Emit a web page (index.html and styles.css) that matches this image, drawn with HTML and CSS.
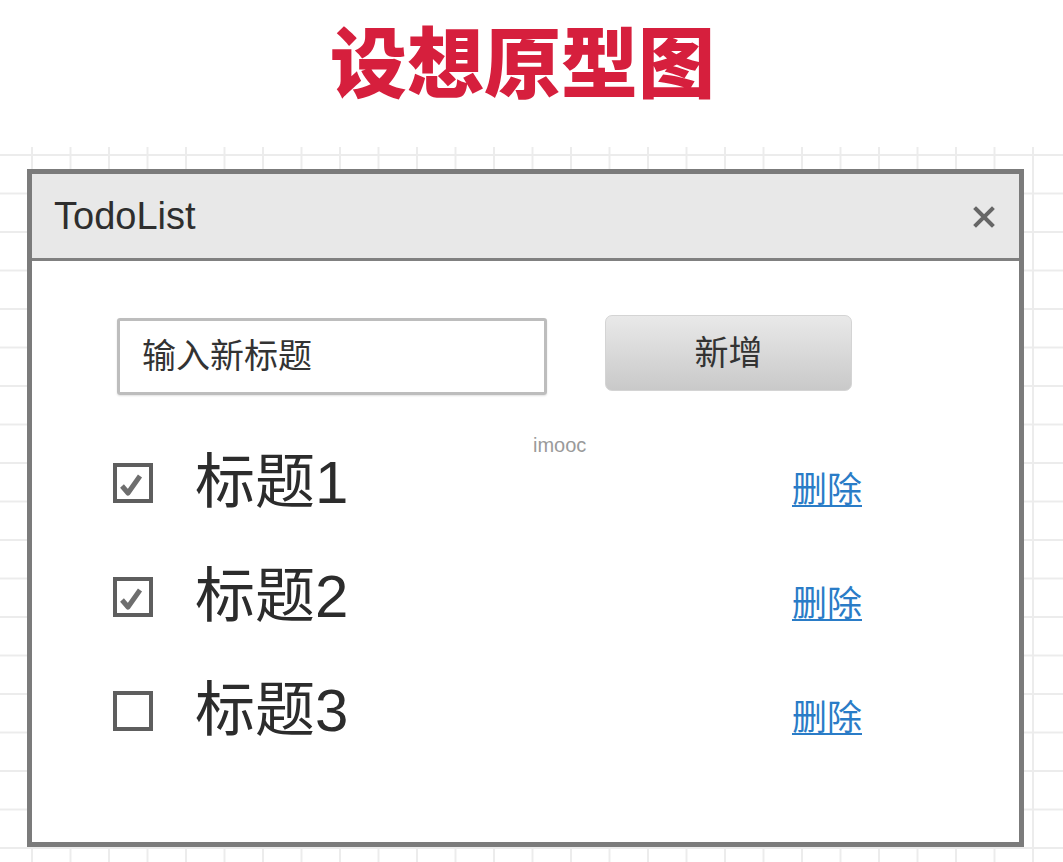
FILE: index.html
```html
<!DOCTYPE html>
<html lang="zh-CN">
<head>
<meta charset="utf-8">
<title>设想原型图</title>
<link rel="stylesheet" href="styles.css">
</head>
<body>
<h1 class="page-title">设想原型图</h1>
<section class="canvas">
  <div class="window">
    <header class="window-header">
      <span class="window-title">TodoList</span>
      <svg class="close-icon" width="22" height="22" viewBox="0 0 22 22" aria-hidden="true">
        <path d="M3 3 L19 19 M19 3 L3 19" stroke="#666" stroke-width="4" stroke-linecap="square" fill="none"/>
      </svg>
    </header>
    <div class="window-body">
      <div class="add-row">
        <div class="todo-input">输入新标题</div>
        <button class="add-btn" type="button">新增</button>
      </div>
      <ul class="todo-list">
        <li class="todo-item">
          <span class="checkbox">
            <svg width="32" height="32" viewBox="0 0 32 32" aria-hidden="true"><path d="M5 19 L11 26 L23 9" stroke="#6e6e6e" stroke-width="5" fill="none" stroke-linejoin="round"/></svg>
          </span>
          <span class="todo-text">标题1</span>
          <a class="delete-link" href="#">删除</a>
        </li>
        <li class="todo-item">
          <span class="checkbox">
            <svg width="32" height="32" viewBox="0 0 32 32" aria-hidden="true"><path d="M5 19 L11 26 L23 9" stroke="#6e6e6e" stroke-width="5" fill="none" stroke-linejoin="round"/></svg>
          </span>
          <span class="todo-text">标题2</span>
          <a class="delete-link" href="#">删除</a>
        </li>
        <li class="todo-item">
          <span class="checkbox"></span>
          <span class="todo-text">标题3</span>
          <a class="delete-link" href="#">删除</a>
        </li>
      </ul>
    </div>
  </div>
  <span class="watermark">imooc</span>
</section>
</body>
</html>
```

FILE: styles.css
```css
html, body {
  margin: 0;
  padding: 0;
  background: #ffffff;
}

body {
  width: 1063px;
  height: 862px;
  overflow: hidden;
  font-family: "Liberation Sans", "Noto Sans CJK SC", sans-serif;
  color: #333333;
}

.page-title {
  margin: 0;
  height: 147px;
  box-sizing: border-box;
  padding: 0 18px 30px 0;
  display: flex;
  align-items: center;
  justify-content: center;
  font-family: "Noto Sans CJK SC", sans-serif;
  font-weight: 900;
  font-size: 77px;
  line-height: 1;
  color: #d61f3d;
  letter-spacing: 0;
}

.canvas {
  position: relative;
  height: 715px;
  padding: 22px 0 0 27px;
  box-sizing: border-box;
  background-color: #ffffff;
  background-image:
    linear-gradient(to right, #ececec 2px, transparent 2px),
    linear-gradient(to bottom, #ececec 2px, transparent 2px);
  background-size: 38.5px 38.5px;
  background-position: 31px 7px;
}

.window {
  width: 997px;
  height: 678px;
  box-sizing: border-box;
  border: 5px solid #7b7b7b;
  background: #ffffff;
  display: flex;
  flex-direction: column;
}

.window-header {
  height: 87px;
  box-sizing: border-box;
  background: #e8e8e8;
  border-bottom: 3px solid #808080;
  display: flex;
  align-items: center;
  justify-content: space-between;
  padding: 0 24px 0 22px;
}

.window-title {
  font-size: 38px;
  line-height: 84px;
  color: #2e2e2e;
}

.close-icon {
  display: block;
  margin-top: 2px;
}

.window-body {
  flex: 1;
  padding: 54px 0 0 85px;
}

.add-row {
  display: flex;
  align-items: flex-start;
}

.todo-input {
  width: 430px;
  height: 77px;
  margin-top: 3px;
  box-sizing: border-box;
  border: 3px solid #bdbdbd;
  border-radius: 3px;
  box-shadow: 0 1px 2px rgba(0, 0, 0, 0.12);
  padding-left: 22px;
  font-size: 34px;
  line-height: 71px;
  color: #333333;
}

.add-btn {
  margin-left: 58px;
  width: 247px;
  height: 76px;
  border: 1px solid #d4d4d4;
  border-radius: 7px;
  background: linear-gradient(to bottom, #e9e9e9, #c9c9c9);
  font-family: "Liberation Sans", "Noto Sans CJK SC", sans-serif;
  font-size: 34px;
  line-height: 1;
  color: #333333;
  padding: 0;
}

.todo-list {
  list-style: none;
  margin: 31px 0 0 -4px;
  padding: 0 157px 0 0;
}

.todo-item {
  height: 114px;
  display: flex;
  align-items: center;
}

.checkbox {
  width: 40px;
  height: 40px;
  box-sizing: border-box;
  border: 4px solid #5e5e5e;
  display: flex;
  align-items: center;
  justify-content: center;
}

.checkbox svg {
  display: block;
}

.todo-text {
  flex: 1;
  margin-left: 42px;
  font-size: 60px;
  line-height: 114px;
  color: #2c2c2c;
}

.delete-link {
  font-size: 35px;
  line-height: 1;
  color: #2a7cc7;
  text-decoration: underline;
  text-underline-offset: 3px;
  text-decoration-thickness: 2px;
  margin-top: 12px;
}

.watermark {
  position: absolute;
  left: 533px;
  top: 288px;
  font-family: "Liberation Sans", sans-serif;
  font-size: 20px;
  line-height: 1;
  color: #9a9a9a;
}
```
